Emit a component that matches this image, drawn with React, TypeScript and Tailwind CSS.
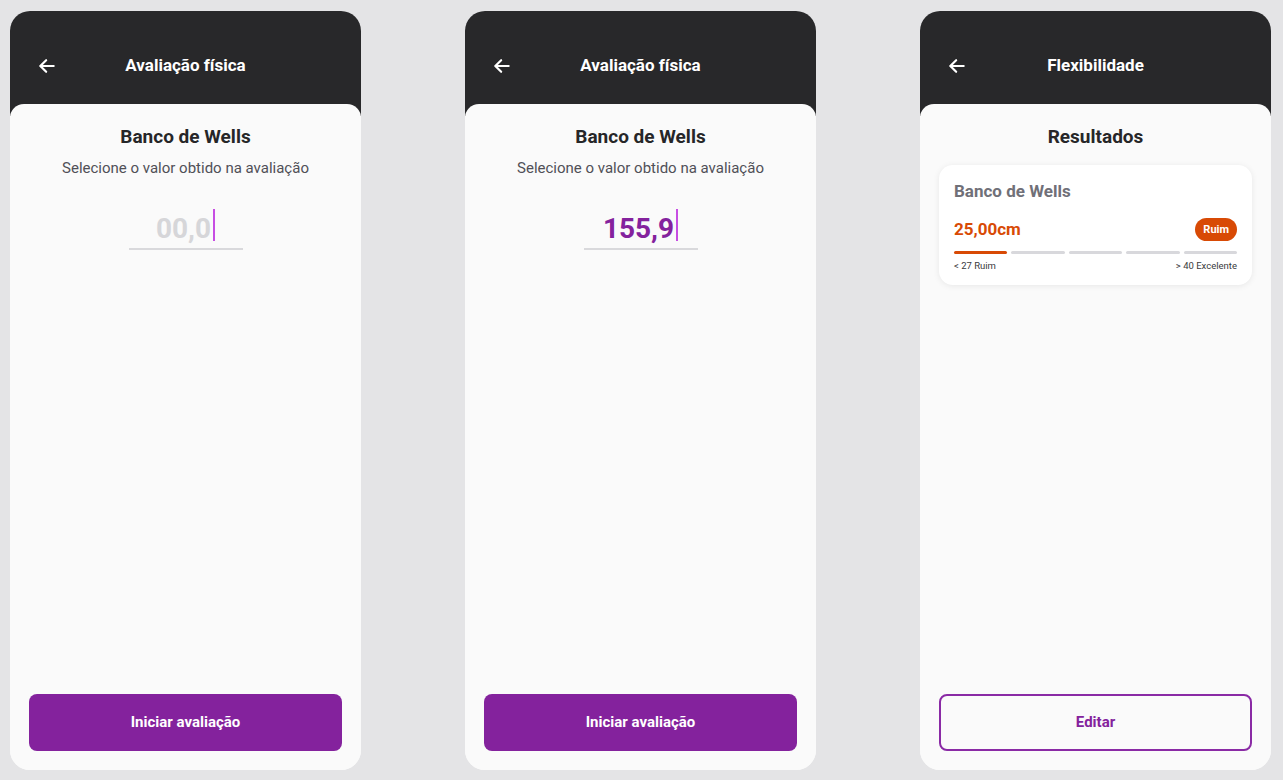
import React from 'react';

const font = { fontFamily: 'Roboto, "Noto Sans", sans-serif' };

// Back arrow used in every header
const BackArrow = () => (
  <svg width="20" height="20" viewBox="0 0 24 24" fill="none" stroke="white" strokeWidth="2.6" strokeLinecap="round" strokeLinejoin="round">
    <path d="M20 12H4.5" />
    <path d="M11 5l-7 7 7 7" />
  </svg>
);

const Phone = ({ title, children }: { title: string; children: React.ReactNode }) => (
  <div className="w-[351px] h-[759px] rounded-[20px] overflow-hidden bg-[#fafafa] flex flex-col">
    <header className="h-[105px] shrink-0 bg-[#28282a] relative">
      <div className="h-[110px] flex items-center justify-center">
        <span className="absolute left-[27px] top-[45px]">
          <BackArrow />
        </span>
        <h1 className="text-white text-[17px] font-bold">{title}</h1>
      </div>
    </header>
    <main className="relative z-10 -mt-[12px] flex-1 rounded-t-[14px] bg-[#fafafa] flex flex-col px-[19px] pb-[19px]">
      {children}
    </main>
  </div>
);

const ValueInput = ({ value, filled }: { value: string; filled?: boolean }) => (
  <div className="flex flex-col items-center mt-[30px]">
    <div className="w-[114px] h-[42px] flex items-end justify-center border-b-2 border-[#d9d9dc] pb-[2px]">
      <span className={`text-[28px] leading-[34px] font-bold ${filled ? 'text-[#84229d]' : 'text-[#d6d6d9]'}`}>{value}</span>
      <span className="w-[2px] h-[32px] mb-[5px] ml-[2px] bg-[#c74ee3]" />
    </div>
  </div>
);

const EvalScreen = ({ value, filled }: { value: string; filled?: boolean }) => (
  <Phone title="Avaliação física">
    <h2 className="text-center text-[19px] font-bold text-[#262628] mt-[21px] leading-[24px]">Banco de Wells</h2>
    <p className="text-center text-[15px] text-[#505057] mt-[9px] leading-[20px]">Selecione o valor obtido na avaliação</p>
    <ValueInput value={value} filled={filled} />
    <div className="flex-1" />
    <button className="h-[57px] w-full rounded-[8px] bg-[#84229d] text-white text-[15px] font-bold">Iniciar avaliação</button>
  </Phone>
);

const ResultScreen = () => (
  <Phone title="Flexibilidade">
    <h2 className="text-center text-[19px] font-bold text-[#262628] mt-[21px] leading-[24px]">Resultados</h2>
    <div className="mt-[16px] rounded-[14px] bg-white shadow-[0_1px_6px_rgba(0,0,0,0.08)] px-[15px] pt-[16px] pb-[12px]">
      <p className="text-[17px] font-bold text-[#707078] leading-[20px]">Banco de Wells</p>
      <div className="flex items-center justify-between mt-[16px]">
        <span className="text-[17px] font-bold text-[#d84a05]">25,00cm</span>
        <span className="rounded-full bg-[#d84a05] text-white text-[11px] font-bold px-[8px] h-[23px] flex items-center">Ruim</span>
      </div>
      <div className="flex gap-[4px] mt-[8px]">
        <div className="flex-1 h-[3px] rounded-full bg-[#d84a05]" />
        <div className="flex-1 h-[3px] rounded-full bg-[#d8d8dc]" />
        <div className="flex-1 h-[3px] rounded-full bg-[#d8d8dc]" />
        <div className="flex-1 h-[3px] rounded-full bg-[#d8d8dc]" />
        <div className="flex-1 h-[3px] rounded-full bg-[#d8d8dc]" />
      </div>
      <div className="flex justify-between mt-[5px] text-[9.5px] text-[#3a3a40]">
        <span>&lt; 27 Ruim</span>
        <span>&gt; 40 Excelente</span>
      </div>
    </div>
    <div className="flex-1" />
    <button className="h-[57px] w-full rounded-[8px] border-2 border-[#8a2aa5] text-[#84229d] text-[15px] font-bold">Editar</button>
  </Phone>
);

export default function App() {
  return (
    <div className="w-[1283px] h-[780px] bg-[#e4e4e6] flex items-start pt-[11px] pl-[10px] gap-[104px]" style={font}>
      <EvalScreen value="00,0" />
      <EvalScreen value="155,9" filled />
      <ResultScreen />
    </div>
  );
}
